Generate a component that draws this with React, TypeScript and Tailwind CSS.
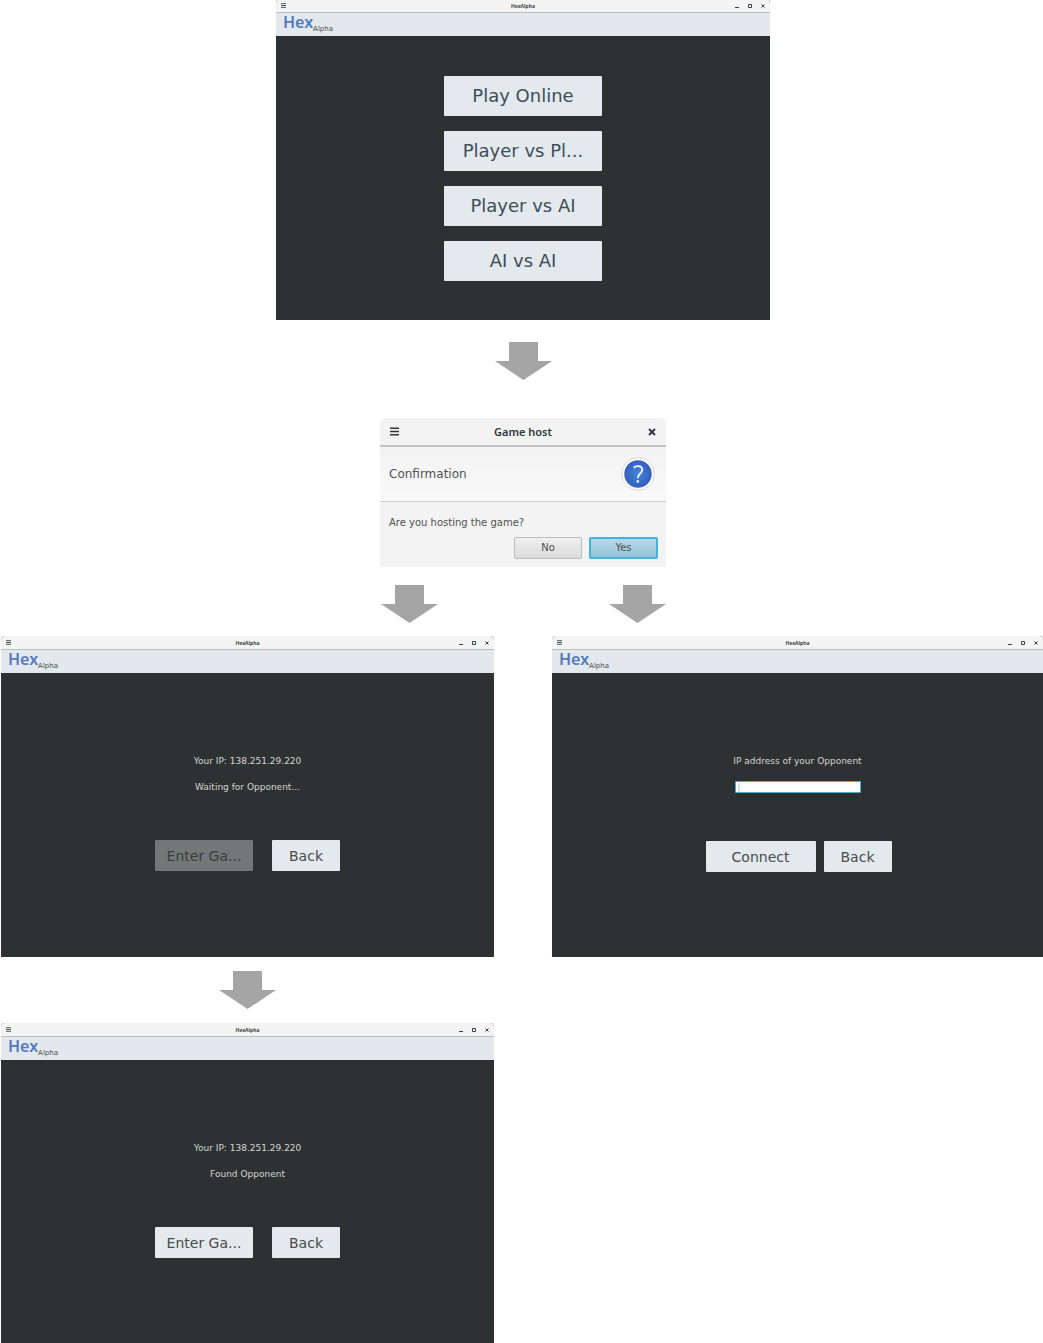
import type { ReactNode } from 'react';

function MenuIcon({ className }: { className: string }) {
  return (
    <svg viewBox="0 0 9 9" className={className} aria-hidden="true">
      <path d="M0 1.2h9M0 4.5h9M0 7.8h9" stroke="currentColor" strokeWidth="1.6" />
    </svg>
  );
}

function CloseIcon({ className }: { className: string }) {
  return (
    <svg viewBox="0 0 8 8" className={className} aria-hidden="true">
      <path d="M1 1l6 6M7 1l-6 6" stroke="currentColor" strokeWidth="2" />
    </svg>
  );
}

function DownArrow() {
  return (
    <svg viewBox="0 0 57 38" className="block h-[38px] w-[57px]" aria-hidden="true">
      <path d="M14 0h29v19h14L28.500 38 0 19h14z" fill="#a5a5a5" />
    </svg>
  );
}

function GameWindow({ children, className = '' }: { children: ReactNode; className?: string }) {
  return (
    <section className={`overflow-hidden rounded-t-sm bg-[#2e3132] ${className}`}>
      <div className="grid h-[14px] grid-cols-[1fr_auto_1fr] items-center border-b border-[#bcbfc0] bg-[#f4f4f4] px-[5px] text-[#3c4143]">
        <button type="button" aria-label="Menu" className="flex size-[5px]">
          <MenuIcon className="size-[5px]" />
        </button>
        <h2 className="font-['Noto_Sans'] text-[5px] leading-[12px] font-bold">HexAlpha</h2>
        <div className="flex items-center justify-end gap-[9px]">
          <button type="button" aria-label="Minimize" className="flex size-1">
            <svg viewBox="0 0 4 4" className="size-1" aria-hidden="true">
              <path d="M0 3.500h4" stroke="currentColor" />
            </svg>
          </button>
          <button type="button" aria-label="Maximize" className="flex size-1">
            <svg viewBox="0 0 4 4" className="size-1" aria-hidden="true">
              <path d="M.5.5h3v3h-3z" fill="none" stroke="currentColor" />
            </svg>
          </button>
          <button type="button" aria-label="Close" className="flex size-1">
            <CloseIcon className="size-1" />
          </button>
        </div>
      </div>
      <div className="flex h-[23px] items-start bg-[#e3e8ec] pl-[7px]">
        <span className="font-['Noto_Sans'] text-[16px] leading-[19px] font-semibold text-[#5279bd]">Hex</span>
        <span className="pt-3 text-[7px] leading-[8px] text-[#484c4e]">Alpha</span>
      </div>
      {children}
    </section>
  );
}

const menuItems = ['Play Online', 'Player vs Pl...', 'Player vs AI', 'AI vs AI'];

function FlatButton({ children, className, disabled }: { children: ReactNode; className: string; disabled?: boolean }) {
  return (
    <button
      type="button"
      disabled={disabled}
      className={`h-[31px] rounded-[1px] text-[14px] leading-[20px] whitespace-nowrap ${disabled ? 'bg-[#747778] text-[#3a3d3e]' : 'bg-[#e4e9ed] text-[#494c4e]'} ${className}`}
    >
      {children}
    </button>
  );
}

function HostScreen({ status, ready, className }: { status: string; ready: boolean; className: string }) {
  return (
    <div className={`flex flex-col items-center pt-20 text-[9px] leading-[16px] text-[#d3d5d6] ${className}`}>
      <p>Your IP: 138.251.29.220</p>
      <p className="mt-[10px]">{status}</p>
      <div className="mt-[45px] flex gap-[19px]">
        <FlatButton className="w-[98px]" disabled={!ready}>Enter Ga...</FlatButton>
        <FlatButton className="w-[68px]">Back</FlatButton>
      </div>
    </div>
  );
}

function JoinScreen() {
  return (
    <form className="flex flex-col items-center pt-20 pb-[85px] text-[9px] leading-[16px] text-[#d3d5d6]">
      <label htmlFor="opponent-ip">IP address of your Opponent</label>
      <div className="mt-[10px] flex h-4 items-center">
        <input
          id="opponent-ip"
          type="text"
          placeholder="|"
          className="h-3 w-[126px] rounded-[1px] border border-[#45b2d3] bg-white px-0.5 text-[8px] leading-[10px] text-[#333] outline-none placeholder:text-[#aaa]"
        />
      </div>
      <div className="mt-[46px] flex gap-2 pl-[2px]">
        <FlatButton className="w-[110px]">Connect</FlatButton>
        <FlatButton className="w-[68px]">Back</FlatButton>
      </div>
    </form>
  );
}

function HostDialog() {
  return (
    <section role="dialog" aria-labelledby="host-title" className="w-[286px] overflow-hidden rounded-t-[5px] bg-[#f3f3f3] text-[#505050]">
      <div className="grid h-[29px] grid-cols-[1fr_auto_1fr] items-center border-b-2 border-[#c3c3c3] px-[10px] text-[#30363a]">
        <button type="button" aria-label="Menu" className="flex size-[9px]">
          <MenuIcon className="size-[9px]" />
        </button>
        <h2 id="host-title" className="font-['Noto_Sans'] text-[11px] leading-[16px] font-semibold">Game host</h2>
        <button type="button" aria-label="Close" className="flex size-2 justify-self-end">
          <CloseIcon className="size-2" />
        </button>
      </div>
      <div className="flex h-[55px] items-center justify-between border-b border-[#cacaca] bg-linear-to-b from-[#f2f2f2] to-[#fafafa] pr-[11px] pl-[9px]">
        <p className="text-[12px] leading-[16px]">Confirmation</p>
        <svg viewBox="0 0 34 34" className="size-[34px]" aria-hidden="true">
          <defs>
            <radialGradient id="help-fill">
              <stop offset="0" stopColor="#4585da" />
              <stop offset="1" stopColor="#355fbd" />
            </radialGradient>
          </defs>
          <circle cx="17" cy="17" r="16.300" fill="#fff" stroke="#d8d8d8" />
          <circle cx="17" cy="17" r="13.700" fill="url(#help-fill)" />
          <path d="M12.700 10.800q1.800-1.700 4.300-1.700 4.200 0 4.200 3.700 0 2-2.200 3.900-2.200 1.900-2.200 4.600" fill="none" stroke="#eef4fc" strokeWidth="1.900" />
          <circle cx="16.800" cy="24.400" r="1.300" fill="#eef4fc" />
        </svg>
      </div>
      <p className="px-[9px] pt-[13px] text-[10px] leading-[16px]">Are you hosting the game?</p>
      <div className="flex justify-end gap-[7px] px-2 pt-[6px] pb-[8px] text-[10px] leading-[14px]">
        <button type="button" className="h-[22px] w-[68px] rounded-[2px] border border-[#bdbdbd] bg-linear-to-b from-[#f0f0f0] to-[#dadada]">No</button>
        <button type="button" className="h-[22px] w-[69px] rounded-[2px] border-2 border-[#3fb4dc] bg-linear-to-b from-[#b4d9ea] to-[#98c2d6]">Yes</button>
      </div>
    </section>
  );
}

export default function App() {
  return (
    <main className="overflow-hidden bg-white font-['DejaVu_Sans',sans-serif]">
      <div className="-mt-px flex flex-col items-center pl-[3px]">
        <GameWindow className="w-[494px]">
          <nav className="flex flex-col items-center gap-[15px] pt-10 pb-[39px]">
            {menuItems.map((item) => (
              <button
                key={item}
                type="button"
                className="h-10 w-[158px] rounded-[1px] bg-[#e4e9ed] text-[18px] leading-[24px] whitespace-nowrap text-[#3d4d5a]"
              >
                {item}
              </button>
            ))}
          </nav>
        </GameWindow>
        <div className="pt-[22px] pb-[38px]">
          <DownArrow />
        </div>
        <HostDialog />
        <div className="flex gap-[171px] pt-[18px] pb-[13px]">
          <DownArrow />
          <DownArrow />
        </div>
      </div>
      <div className="grid grid-cols-[493fr_491fr] gap-x-[58px] pl-px">
        <GameWindow>
          <HostScreen status="Waiting for Opponent..." ready={false} className="pb-[86px]" />
        </GameWindow>
        <GameWindow>
          <JoinScreen />
        </GameWindow>
        <div>
          <div className="flex justify-center pt-[14px] pb-[14px]">
            <DownArrow />
          </div>
          <GameWindow>
            <HostScreen status="Found Opponent" ready className="pb-[85px]" />
          </GameWindow>
        </div>
      </div>
    </main>
  );
}
